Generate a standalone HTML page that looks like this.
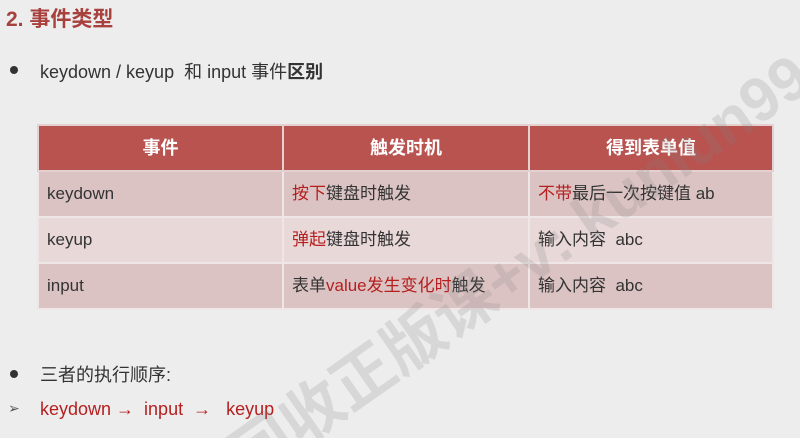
<!DOCTYPE html>
<html><head><meta charset="utf-8"><style>
*{margin:0;padding:0;box-sizing:border-box}
html,body{width:800px;height:438px;overflow:hidden}
body{background:#ededed;font-family:"Liberation Sans","Noto Sans CJK SC",sans-serif;color:#333;position:relative}
.a{position:absolute;white-space:nowrap}
.r{color:#b51f1f}
.h{color:#a8403d;font-weight:bold;font-size:21px;left:6px;top:3px}
.dot{width:8px;height:8px;border-radius:50%;background:#333}
table{position:absolute;left:37px;top:124px;width:737px;border-collapse:collapse;font-size:17px}
td,th{border:2px solid #efe7e7;padding:0 8px;height:46px;text-align:left;vertical-align:middle;line-height:20px}
th{background:#b85350;color:#fff;text-align:center;font-size:18px;font-weight:bold;border-color:#e4d0d0}
tr.o td{background:#dcc3c3}
tr.e td{background:#e8d8d8}
.clip{position:absolute;left:0;top:0;width:800px;height:438px;overflow:hidden;pointer-events:none}
.wm{position:absolute;left:255px;top:430px;transform:rotate(-35deg);transform-origin:left bottom;font-size:62px;line-height:62px;color:rgba(130,130,130,0.2);font-weight:bold;white-space:nowrap}
</style></head><body>
<div class="a h">2. 事件类型</div>
<div class="a dot" style="left:10px;top:66px"></div>
<div class="a" style="left:40px;top:58px;font-size:18px">keydown / keyup&nbsp; 和 input 事件<b>区别</b></div>
<table>
<tr><th style="width:245px">事件</th><th style="width:246px">触发时机</th><th>得到表单值</th></tr>
<tr class="o"><td>keydown</td><td><span class="r">按下</span>键盘时触发</td><td><span class="r">不带</span>最后一次按键值 ab</td></tr>
<tr class="e"><td>keyup</td><td><span class="r">弹起</span>键盘时触发</td><td>输入内容&nbsp; abc</td></tr>
<tr class="o"><td>input</td><td>表单<span class="r">value发生变化时</span>触发</td><td>输入内容&nbsp; abc</td></tr>
</table>
<div class="a dot" style="left:10px;top:370px"></div>
<div class="a" style="left:40px;top:361px;font-size:18px">三者的执行顺序:</div>
<div class="a" style="left:8px;top:400px;font-size:14px;color:#555">➢</div>
<div class="a r" style="left:40px;top:399px;font-size:18px">keydown → &nbsp;input &nbsp;→ &nbsp; keyup</div>
<div class="clip"><div class="wm">回收正版课+v: kunlun99</div></div>
</body></html>
